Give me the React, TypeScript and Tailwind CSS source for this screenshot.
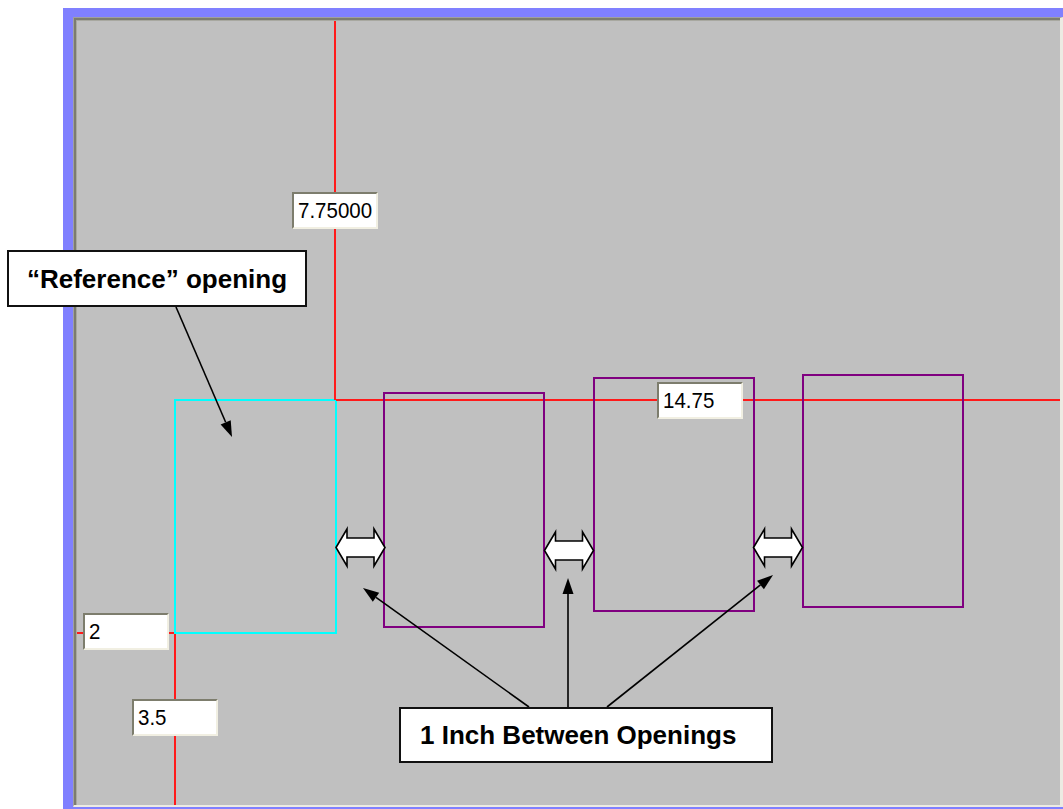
import React from "react";

const OX = 77;
const OY = 21;

function arrowHead(x1: number, y1: number, x2: number, y2: number, len = 16, half = 5.5) {
  const dx = x2 - x1;
  const dy = y2 - y1;
  const d = Math.hypot(dx, dy);
  const ux = dx / d;
  const uy = dy / d;
  const bx = x2 - ux * len;
  const by = y2 - uy * len;
  const px = -uy;
  const py = ux;
  return {
    bx,
    by,
    pts: `${x2},${y2} ${bx + px * half},${by + py * half} ${bx - px * half},${by - py * half}`,
  };
}

function Pointer({ x1, y1, x2, y2 }: { x1: number; y1: number; x2: number; y2: number }) {
  const h = arrowHead(x1, y1, x2, y2);
  return (
    <g>
      <line x1={x1} y1={y1} x2={h.bx} y2={h.by} stroke="#000" strokeWidth={1.6} />
      <polygon points={h.pts} fill="#000" />
    </g>
  );
}

function DoubleArrow({ x, y, w = 49, h = 37 }: { x: number; y: number; w?: number; h?: number }) {
  const hl = 11;
  const s1 = 9;
  const s2 = h - 9;
  const p = [
    [0, h / 2],
    [hl, 0],
    [hl, s1],
    [w - hl, s1],
    [w - hl, 0],
    [w, h / 2],
    [w - hl, h],
    [w - hl, s2],
    [hl, s2],
    [hl, h],
  ]
    .map(([a, b]) => `${x + a},${y + b}`)
    .join(" ");
  return <polygon points={p} fill="#fff" stroke="#000" strokeWidth={1.6} strokeLinejoin="miter" />;
}

function Field({ v, pos }: { v: string; pos: string }) {
  return (
    <div
      className={`absolute ${pos} w-[86px] h-[37px] bg-white border-2 border-t-[#7d7d6d] border-l-[#7d7d6d] border-r-[#f1efe2] border-b-[#f1efe2] flex items-center pl-[4px] text-[20.5px] leading-none text-black font-['Liberation_Sans',Arial,sans-serif]`}
    >
      <span className="inline-block scale-y-[1.12] origin-center">{v}</span>
    </div>
  );
}

export default function App() {
  return (
    <div className="relative w-[1063px] h-[809px] bg-white overflow-hidden flex pl-[63px] pt-[8px] font-['Liberation_Sans',Arial,sans-serif]">
      <div className="flex-1 flex flex-col bg-[#8080ff] pl-[10px] pt-[9px] pb-[2px]">
        <div className="flex-1 flex border-l border-t border-l-[#a0a0a0] border-t-[#a0a0a0] border-r-[3px] border-b-2 border-r-[#ecebe3] border-b-[#ecebe3]">
          <div className="flex-1 flex border-l-2 border-t-2 border-[#7c7c70]">
            <div className="flex-1 flex border-l border-t border-[#a8a8a0]">
              <div className="flex-1 relative bg-[#c0c0c0] overflow-hidden">
                <svg className="absolute left-0 top-0" width={983} height={784}>
                  <g transform={`translate(${-OX} ${-OY})`}>
                    <rect x={174} y={399} width={163} height={2} fill="#00ffff" />
                    <rect x={174} y={632} width={163} height={2} fill="#00ffff" />
                    <rect x={174} y={399} width={2} height={235} fill="#00ffff" />
                    <rect x={335} y={399} width={2} height={235} fill="#00ffff" />
                    <rect x={334} y={0} width={2} height={400} fill="#ff1a1a" />
                    <rect x={336} y={399} width={740} height={2} fill="#ff1a1a" />
                    <rect x={60} y={632} width={114} height={2} fill="#ff1a1a" />
                    <rect x={174} y={634} width={2} height={200} fill="#ff1a1a" />
                    <rect x={384} y={393} width={160} height={234} fill="none" stroke="#800080" strokeWidth={2} />
                    <rect x={594} y={378} width={160} height={233} fill="none" stroke="#800080" strokeWidth={2} />
                    <rect x={803} y={375} width={160} height={232} fill="none" stroke="#800080" strokeWidth={2} />
                    <DoubleArrow x={336} y={529} />
                    <DoubleArrow x={544.5} y={532} />
                    <DoubleArrow x={753.5} y={529} />
                  </g>
                </svg>
                <Field v="7.75000" pos="left-[215px] top-[171px]" />
                <Field v="14.75" pos="left-[580px] top-[361px]" />
                <Field v="2" pos="left-[6px] top-[592px]" />
                <Field v="3.5" pos="left-[55px] top-[678px]" />
              </div>
            </div>
          </div>
        </div>
      </div>

      <svg className="absolute left-0 top-0 pointer-events-none" width={1063} height={809}>
        <Pointer x1={176} y1={307} x2={232} y2={437} />
        <Pointer x1={529} y1={707} x2={363} y2={588} />
        <Pointer x1={568} y1={707} x2={568} y2={578} />
        <Pointer x1={607} y1={707} x2={773} y2={575} />
      </svg>
      <div className="absolute left-[7px] top-[250px] w-[300px] h-[57px] bg-white border-2 border-[#111] flex items-center justify-center text-[26px] font-bold text-black leading-none">
        “Reference” opening
      </div>
      <div className="absolute left-[399px] top-[707px] w-[374px] h-[56px] bg-white border-2 border-[#111] flex items-center pl-[19px] text-[26px] font-bold text-black leading-none">
        1 Inch Between Openings
      </div>
    </div>
  );
}
